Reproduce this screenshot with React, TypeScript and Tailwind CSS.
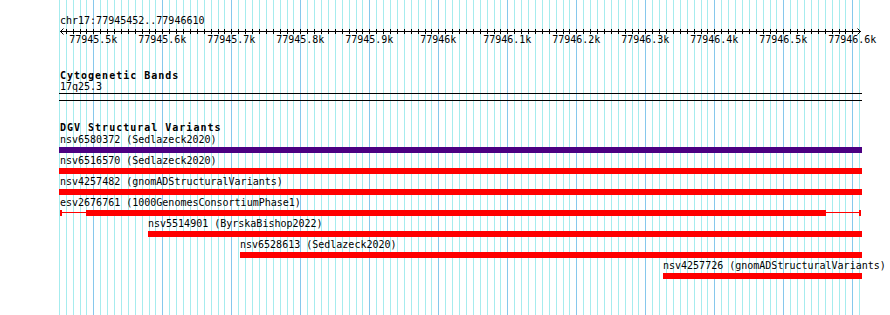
import React from "react";

const X0 = 58.8;
const STEP = 6.9;
const gridLines = Array.from({ length: 117 }, (_, k) => ({
  x: Math.round(X0 + STEP * k),
  major: k % 10 === 5,
}));

const ticks = gridLines.filter((g) => g.x > 62 && g.x < 857).map((g) => g.x);

const majorLabels = [
  "77945.5k",
  "77945.6k",
  "77945.7k",
  "77945.8k",
  "77945.9k",
  "77946k",
  "77946.1k",
  "77946.2k",
  "77946.3k",
  "77946.4k",
  "77946.5k",
  "77946.6k",
].map((t, i) => ({ t, x: 93.3 + 69 * i }));

type Feat = {
  label: string;
  x1: number;
  color: string;
  thin?: { t1: number; t2: number };
};

const feats: Feat[] = [
  { label: "nsv6580372 (Sedlazeck2020)", x1: 59, color: "#4b0082" },
  { label: "nsv6516570 (Sedlazeck2020)", x1: 59, color: "#ff0000" },
  { label: "nsv4257482 (gnomADStructuralVariants)", x1: 59, color: "#ff0000" },
  {
    label: "esv2676761 (1000GenomesConsortiumPhase1)",
    x1: 59,
    color: "#ff0000",
    thin: { t1: 86, t2: 826 },
  },
  { label: "nsv5514901 (ByrskaBishop2022)", x1: 148, color: "#ff0000" },
  { label: "nsv6528613 (Sedlazeck2020)", x1: 240, color: "#ff0000" },
  { label: "nsv4257726 (gnomADStructuralVariants)", x1: 663, color: "#ff0000" },
];

function Row({ f }: { f: Feat }) {
  const labelLeft = f.x1 === 59 ? 0 : f.x1 - 60;
  return (
    <div className="relative h-[21px]">
      <div
        className="absolute top-0 whitespace-nowrap leading-[10px] h-[10px]"
        style={{ left: labelLeft }}
      >
        {f.label}
      </div>
      {f.thin ? (
        <>
          <div className="absolute top-[14px] h-[1px] bg-[#ff0000]" style={{ left: 0, width: 801 }} />
          <div className="absolute top-[12px] h-[6px] w-[2px] bg-[#ff0000]" style={{ left: 0 }} />
          <div className="absolute top-[12px] h-[6px] w-[2px] bg-[#ff0000]" style={{ left: 799 }} />
          <div
            className="absolute top-[12px] h-[6px] bg-[#ff0000]"
            style={{ left: f.thin.t1 - 60, width: f.thin.t2 - f.thin.t1 }}
          />
        </>
      ) : (
        <div
          className="absolute top-[12px] h-[6px]"
          style={{ left: f.x1 - 60, width: 862 - f.x1, background: f.color }}
        />
      )}
    </div>
  );
}

export default function App() {
  return (
    <div className="relative w-[890px] h-[315px] overflow-hidden bg-white text-black text-[10px] font-['DejaVu_Sans_Mono',monospace]">
      {/* grid */}
      <div className="absolute inset-0">
        {gridLines.map((g, i) => (
          <div
            key={i}
            className={`absolute top-0 bottom-0 w-[1px] ${g.major ? "bg-[#86c8ec]" : "bg-[#a6ecee]"}`}
            style={{ left: g.x }}
          />
        ))}
      </div>

      <div className="relative flex flex-col pl-[60px] pt-[16px]">
        <div className="h-[10px] leading-[10px] whitespace-nowrap">chr17:77945452..77946610</div>

        {/* ruler */}
        <div className="relative h-[20px] w-[800px]">
          <svg
            className="absolute left-0 top-0 overflow-visible"
            width={800}
            height={20}
            shapeRendering="crispEdges"
          >
            <rect x={0} y={5} width={801} height={1} fill="#000" />
            {ticks.map((x, i) => (
              <rect key={i} x={x - 60} y={3} width={1} height={5} fill="#000" />
            ))}
            <path d="M3.5 2.5 L0.5 5.5 L3.5 8.5" fill="none" stroke="#000" strokeWidth={1} shapeRendering="auto" />
            <path d="M797.5 2.5 L800.5 5.5 L797.5 8.5" fill="none" stroke="#000" strokeWidth={1} shapeRendering="auto" />
          </svg>
          {majorLabels.map((l) => (
            <div
              key={l.t}
              className="absolute top-[9px] -translate-x-1/2 leading-[10px] whitespace-nowrap"
              style={{ left: l.x - 60 }}
            >
              {l.t}
            </div>
          ))}
        </div>

        {/* cytogenetic bands */}
        <div className="mt-[24px] h-[11px] leading-[11px] font-bold tracking-[1px] whitespace-nowrap">
          Cytogenetic Bands
        </div>
        <div className="h-[11px] leading-[11px]">17q25.3</div>
        <div className="mt-[1px] -ml-[1px] w-[803px] h-[8px] border-y border-black" />

        {/* DGV */}
        <div className="mt-[22px] h-[12px] leading-[10px] font-bold tracking-[1px] whitespace-nowrap">
          DGV Structural Variants
        </div>
        <div className="flex flex-col">
          {feats.map((f) => (
            <Row key={f.label} f={f} />
          ))}
        </div>
      </div>
    </div>
  );
}
